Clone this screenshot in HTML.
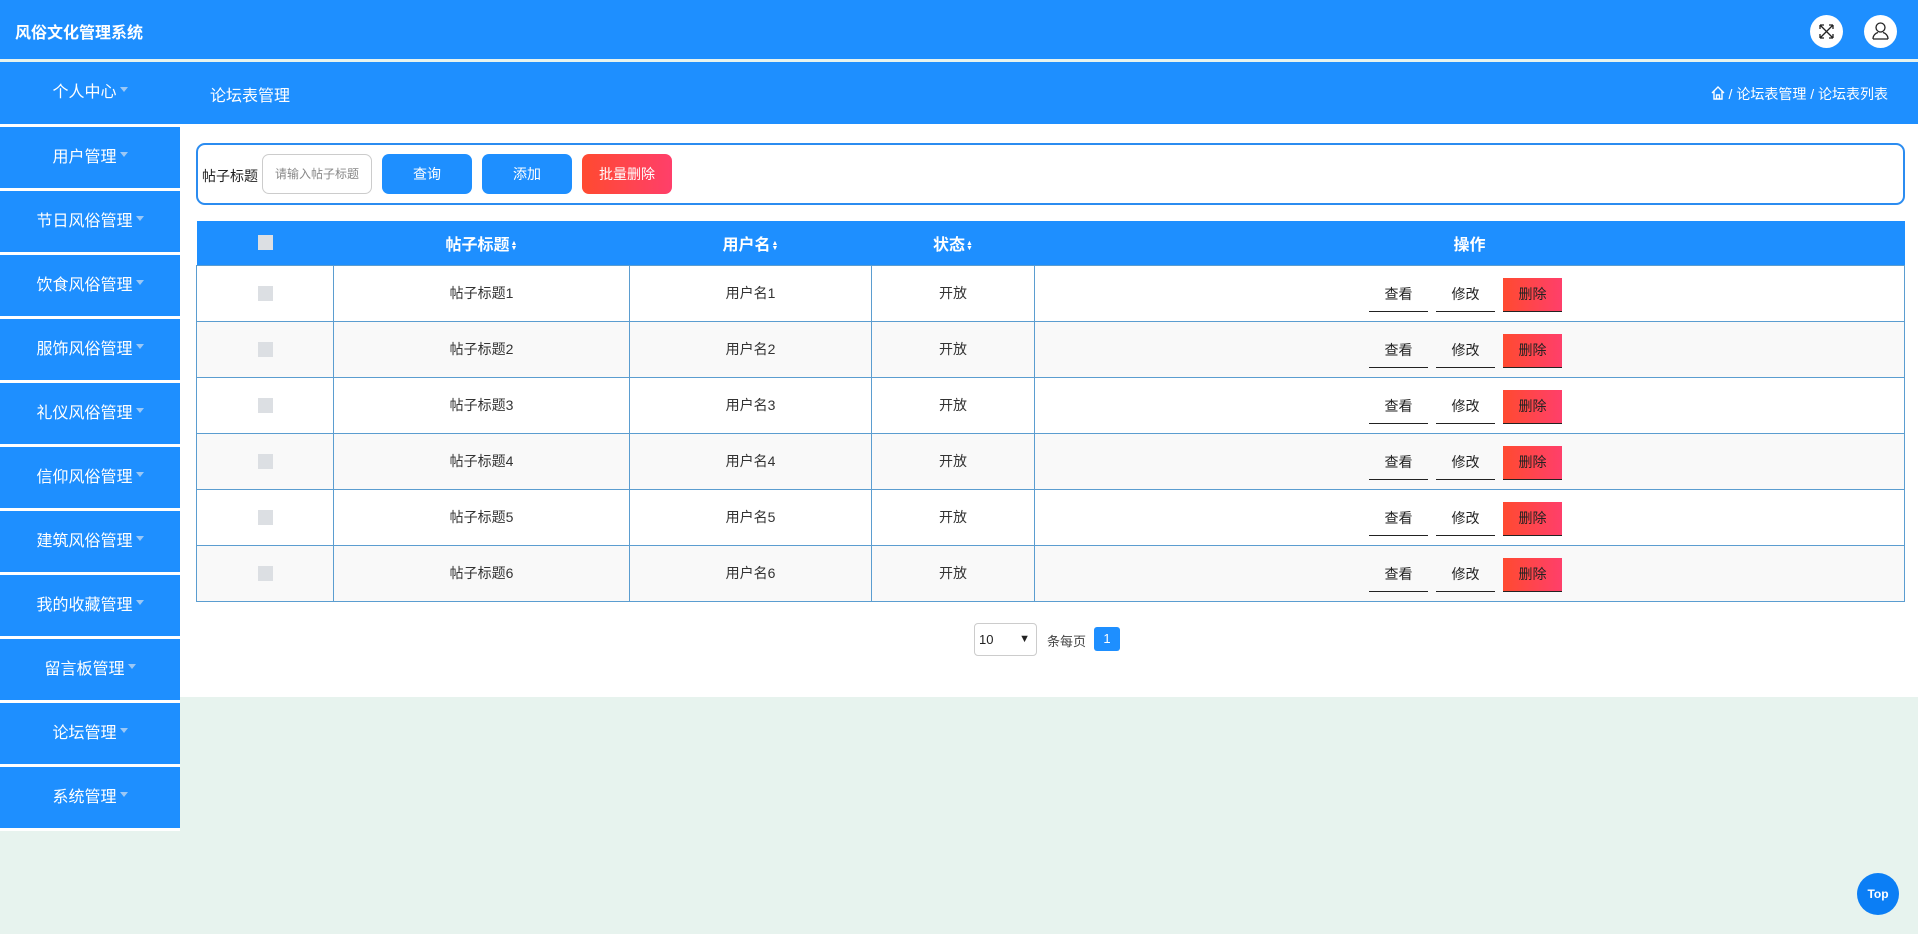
<!DOCTYPE html>
<html><head><meta charset="utf-8"><style>
*{box-sizing:border-box;margin:0;padding:0}
body{width:1918px;height:934px;background:#e7f3ee;font-family:"Liberation Sans","Noto Sans CJK SC",sans-serif;position:relative;overflow:hidden}
.hdr{position:absolute;left:0;top:0;width:1918px;height:59px;background:#1e8fff}
.hdr .t{position:absolute;left:15px;top:19px;color:#fff;font-size:16px;font-weight:bold}
.ic{position:absolute;top:15px;width:33px;height:33px;border-radius:50%;background:#fff}
.bar{position:absolute;left:0;top:62px;width:1918px;height:62px;background:#1e8fff;color:#fff}
.side{position:absolute;left:0;top:124px;width:180px;height:707px;background:#fff}
.it{position:absolute;left:0;width:180px;height:61px;background:#1e8fff;color:#fff;font-size:16px;text-align:center;line-height:61px}
.it:after{content:"";display:inline-block;border:4px solid transparent;border-top:5px solid #9cc8f5;margin-left:3px;vertical-align:1px}
.main{position:absolute;left:180px;top:124px;width:1738px;height:573px;background:#fff}
.sb{position:absolute;left:16px;top:19px;width:1709px;height:62px;border:2px solid #2b8cf0;border-radius:9px}
.btn{position:absolute;top:9px;height:40px;border-radius:7px;color:#fff;font-size:14px;text-align:center;line-height:40px;background:#1e8fff;width:90px}
table{position:absolute;left:16px;top:97px;width:1709px;border-collapse:collapse;font-size:14px;color:#333}
th{background:#1e8fff;color:#fff;height:44px;font-size:16px;vertical-align:middle}
td{border:1px solid #5b9dd0;height:56px;text-align:center}
tr:nth-child(odd) td{background:#f9f9f9}
.cb{display:inline-block;width:15px;height:15px;background:#dcdfe3;vertical-align:middle}
.ab{display:inline-block;width:59px;height:34px;line-height:33px;border-bottom:1.5px solid #222;color:#222;margin:4px 4px 0;font-size:14px;vertical-align:middle}
.del{background:linear-gradient(90deg,#ff4a30,#ff3f6a);color:#222}
.sa{display:inline-block;vertical-align:middle;line-height:5px;font-size:7px;margin-left:1px}
td:last-child{padding-right:8px}
</style></head><body>
<div class="hdr"><div class="t">风俗文化管理系统</div>
<div class="ic" style="left:1810px"><svg width="33" height="33" viewBox="0 0 33 33" fill="none" stroke="#222" stroke-width="1.3"><path d="M10 10l13 13M23 10L10 23M10 10h4M10 10v4M23 10h-4M23 10v4M10 23h4M10 23v-4M23 23h-4M23 23v-4"/></svg></div>
<div class="ic" style="left:1864px"><svg width="33" height="33" viewBox="0 0 33 33" fill="none" stroke="#222" stroke-width="1.3"><circle cx="16.5" cy="12.5" r="4.5"/><path d="M9 24c0-4 3-6 5-6.5M24 24c0-4-3-6-5-6.5M9 24h15"/></svg></div>
</div>
<div class="bar">
<div class="it" style="top:0;height:62px;line-height:62px;background:none">个人中心</div>
<div style="position:absolute;left:210px;top:20px;font-size:16px">论坛表管理</div>
<div style="position:absolute;right:30px;top:22px;font-size:14px"><svg width="14" height="14" viewBox="0 0 14 14" fill="none" stroke="#fff" stroke-width="1.4" style="vertical-align:-1px"><path d="M1 7L7 1l6 6M3 5.5V13h8V5.5M5.5 13V9h3v4"/></svg> / 论坛表管理 / 论坛表列表</div>
</div>
<div class="side">
<div class="it" style="top:3px">用户管理</div>
<div class="it" style="top:67px">节日风俗管理</div>
<div class="it" style="top:131px">饮食风俗管理</div>
<div class="it" style="top:195px">服饰风俗管理</div>
<div class="it" style="top:259px">礼仪风俗管理</div>
<div class="it" style="top:323px">信仰风俗管理</div>
<div class="it" style="top:387px">建筑风俗管理</div>
<div class="it" style="top:451px">我的收藏管理</div>
<div class="it" style="top:515px">留言板管理</div>
<div class="it" style="top:579px">论坛管理</div>
<div class="it" style="top:643px">系统管理</div>
</div>
<div class="main">
<div class="sb">
<div style="position:absolute;left:4px;top:21px;font-size:14px;color:#222">帖子标题</div>
<div style="position:absolute;left:64px;top:9px;width:110px;height:40px;border:1px solid #ccc;border-radius:7px;font-size:12px;color:#888;line-height:38px;text-align:center">请输入帖子标题</div>
<div class="btn" style="left:184px">查询</div>
<div class="btn" style="left:284px">添加</div>
<div class="btn" style="left:384px;background:linear-gradient(90deg,#ff4a30,#ff3f6a)">批量删除</div>
</div>
<table>
<tr><th style="width:137px"><span class="cb"></span></th><th style="width:296px">帖子标题<span class="sa">▲<br>▼</span></th><th style="width:242px">用户名<span class="sa">▲<br>▼</span></th><th style="width:163px">状态<span class="sa">▲<br>▼</span></th><th>操作</th></tr>
<tr><td><span class="cb"></span></td><td>帖子标题1</td><td>用户名1</td><td>开放</td><td><span class="ab">查看</span><span class="ab">修改</span><span class="ab del">删除</span></td></tr>
<tr><td><span class="cb"></span></td><td>帖子标题2</td><td>用户名2</td><td>开放</td><td><span class="ab">查看</span><span class="ab">修改</span><span class="ab del">删除</span></td></tr>
<tr><td><span class="cb"></span></td><td>帖子标题3</td><td>用户名3</td><td>开放</td><td><span class="ab">查看</span><span class="ab">修改</span><span class="ab del">删除</span></td></tr>
<tr><td><span class="cb"></span></td><td>帖子标题4</td><td>用户名4</td><td>开放</td><td><span class="ab">查看</span><span class="ab">修改</span><span class="ab del">删除</span></td></tr>
<tr><td><span class="cb"></span></td><td>帖子标题5</td><td>用户名5</td><td>开放</td><td><span class="ab">查看</span><span class="ab">修改</span><span class="ab del">删除</span></td></tr>
<tr><td><span class="cb"></span></td><td>帖子标题6</td><td>用户名6</td><td>开放</td><td><span class="ab">查看</span><span class="ab">修改</span><span class="ab del">删除</span></td></tr>
</table>
<div style="position:absolute;left:794px;top:499px;width:63px;height:33px;border:1px solid #ccc;border-radius:4px;font-size:13px;line-height:31px;padding-left:4px;color:#222">10<span style="position:absolute;right:6px;font-size:11px">▼</span></div>
<div style="position:absolute;left:867px;top:507px;font-size:13px;color:#444">条每页</div>
<div style="position:absolute;left:914px;top:503px;width:26px;height:24px;background:#1e8fff;border-radius:3px;color:#fff;font-size:13px;text-align:center;line-height:24px">1</div>
</div>
<div style="position:absolute;left:1857px;top:873px;width:42px;height:42px;border-radius:50%;background:#0b7ef5;color:#fff;font-size:12px;font-weight:bold;text-align:center;line-height:42px">Top</div>
</body></html>
